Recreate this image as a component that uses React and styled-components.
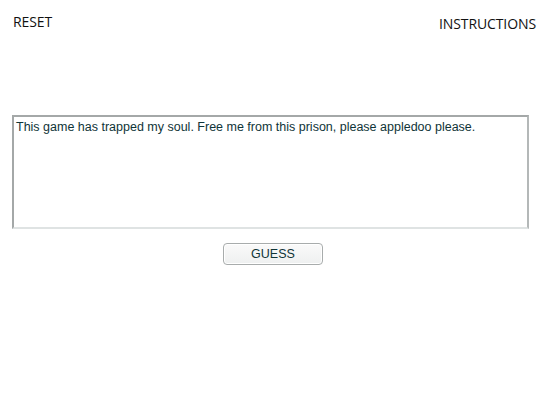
import styled, { createGlobalStyle } from 'styled-components';

const Global = createGlobalStyle`
  body {
    margin: 0;
    background: #fff;
  }
`;

const Page = styled.div`
  width: 550px;
  height: 400px;
  padding: 12px 14px 0 12px;
  box-sizing: border-box;
`;

const TopBar = styled.div`
  display: flex;
  justify-content: space-between;
  align-items: flex-start;
  height: 103px;
  padding-left: 1px;
`;

const NavLink = styled.a`
  font-family: "Open Sans", sans-serif;
  font-size: 14px;
  color: #111;
  text-decoration: none;
  cursor: pointer;
  margin-top: ${p => p.$offset || 0}px;
  letter-spacing: -0.1px;
`;

const Box = styled.div`
  width: 517px;
  height: 114px;
  box-sizing: border-box;
  border-top: 2px solid #a4a8a8;
  border-left: 2px solid #a4a8a8;
  border-right: 2px solid #b4b8b8;
  border-bottom: 2px solid #dfe3e3;
  padding: 3px 2px;
  font-family: "Liberation Sans", Arial, sans-serif;
  font-size: 12.5px;
  color: #0f3438;
`;

const Center = styled.div`
  display: flex;
  justify-content: center;
  padding: 14px 2px 0 0;
`;

const Button = styled.button`
  width: 100px;
  height: 22px;
  border: 1px solid #a8acac;
  border-radius: 4px;
  background: linear-gradient(#fafafa, #eef0f0);
  box-shadow: inset 0 0 0 1px #fff;
  font-family: "Liberation Sans", Arial, sans-serif;
  font-size: 12.5px;
  color: #0f3438;
  padding: 0;
`;

export default function App() {
  return (
    <>
      <Global />
      <Page>
        <TopBar>
          <NavLink>RESET</NavLink>
          <NavLink $offset={2}>INSTRUCTIONS</NavLink>
        </TopBar>
        <Box>This game has trapped my soul. Free me from this prison, please appledoo please.</Box>
        <Center>
          <Button>GUESS</Button>
        </Center>
      </Page>
    </>
  );
}
